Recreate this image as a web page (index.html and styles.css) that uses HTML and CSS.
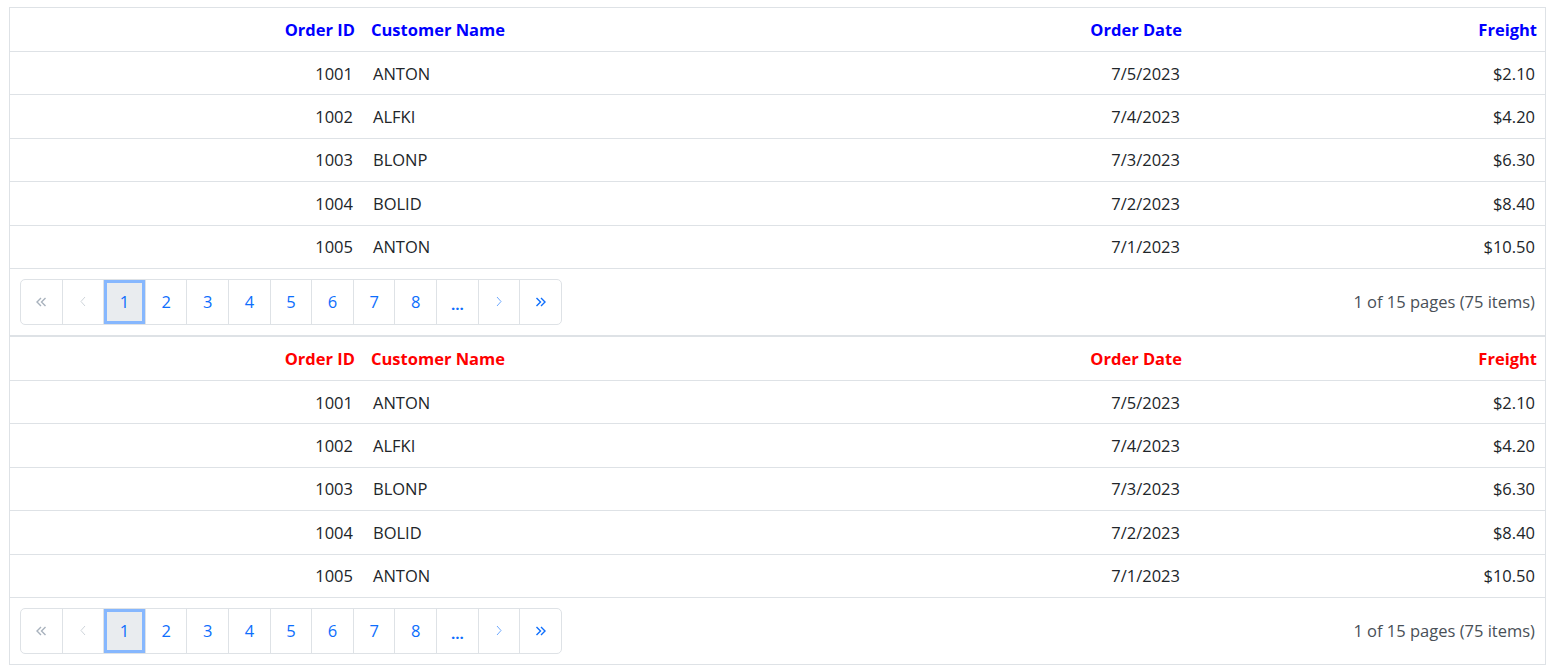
FILE: index.html
```html
<!DOCTYPE html>
<html lang="en">
<head>
<meta charset="utf-8">
<title>Orders</title>
<link rel="stylesheet" href="styles.css">
</head>
<body>
<div class="page">
  <div class="grid">
    <div class="row head blue">
      <div class="cell r">Order ID</div>
      <div class="cell l">Customer Name</div>
      <div class="cell r">Order Date</div>
      <div class="cell r">Freight</div>
    </div>
    <div class="row"><div class="cell r">1001</div><div class="cell l">ANTON</div><div class="cell r">7/5/2023</div><div class="cell r">$2.10</div></div>
    <div class="row"><div class="cell r">1002</div><div class="cell l">ALFKI</div><div class="cell r">7/4/2023</div><div class="cell r">$4.20</div></div>
    <div class="row"><div class="cell r">1003</div><div class="cell l">BLONP</div><div class="cell r">7/3/2023</div><div class="cell r">$6.30</div></div>
    <div class="row"><div class="cell r">1004</div><div class="cell l">BOLID</div><div class="cell r">7/2/2023</div><div class="cell r">$8.40</div></div>
    <div class="row"><div class="cell r">1005</div><div class="cell l">ANTON</div><div class="cell r">7/1/2023</div><div class="cell r">$10.50</div></div>
    <div class="pager">
      <div class="pages">
        <span class="pg dis"><svg width="12" height="10" viewBox="0 0 12 10"><path d="M6 1 L2 5 L6 9 M10.5 1 L6.5 5 L10.5 9" fill="none" stroke="#a8b2bd" stroke-width="1.4"/></svg></span>
        <span class="pg dis"><svg width="6" height="11" viewBox="0 0 6 11"><path d="M5 1 L1 5.5 L5 10" fill="none" stroke="#ced4da" stroke-width="1"/></svg></span>
        <span class="pg active">1</span>
        <span class="pg">2</span>
        <span class="pg">3</span>
        <span class="pg">4</span>
        <span class="pg">5</span>
        <span class="pg">6</span>
        <span class="pg">7</span>
        <span class="pg">8</span>
        <span class="pg dots">...</span>
        <span class="pg"><svg width="6" height="11" viewBox="0 0 6 11"><path d="M1 1 L5 5.5 L1 10" fill="none" stroke="#6ea8fe" stroke-width="1"/></svg></span>
        <span class="pg"><svg width="12" height="10" viewBox="0 0 12 10"><path d="M1.5 1 L5.5 5 L1.5 9 M6 1 L10 5 L6 9" fill="none" stroke="#0d6efd" stroke-width="1.4"/></svg></span>
      </div>
      <div class="info">1 of 15 pages (75 items)</div>
    </div>
  </div>
  <div class="grid">
    <div class="row head red">
      <div class="cell r">Order ID</div>
      <div class="cell l">Customer Name</div>
      <div class="cell r">Order Date</div>
      <div class="cell r">Freight</div>
    </div>
    <div class="row"><div class="cell r">1001</div><div class="cell l">ANTON</div><div class="cell r">7/5/2023</div><div class="cell r">$2.10</div></div>
    <div class="row"><div class="cell r">1002</div><div class="cell l">ALFKI</div><div class="cell r">7/4/2023</div><div class="cell r">$4.20</div></div>
    <div class="row"><div class="cell r">1003</div><div class="cell l">BLONP</div><div class="cell r">7/3/2023</div><div class="cell r">$6.30</div></div>
    <div class="row"><div class="cell r">1004</div><div class="cell l">BOLID</div><div class="cell r">7/2/2023</div><div class="cell r">$8.40</div></div>
    <div class="row"><div class="cell r">1005</div><div class="cell l">ANTON</div><div class="cell r">7/1/2023</div><div class="cell r">$10.50</div></div>
    <div class="pager">
      <div class="pages">
        <span class="pg dis"><svg width="12" height="10" viewBox="0 0 12 10"><path d="M6 1 L2 5 L6 9 M10.5 1 L6.5 5 L10.5 9" fill="none" stroke="#a8b2bd" stroke-width="1.4"/></svg></span>
        <span class="pg dis"><svg width="6" height="11" viewBox="0 0 6 11"><path d="M5 1 L1 5.5 L5 10" fill="none" stroke="#ced4da" stroke-width="1"/></svg></span>
        <span class="pg active">1</span>
        <span class="pg">2</span>
        <span class="pg">3</span>
        <span class="pg">4</span>
        <span class="pg">5</span>
        <span class="pg">6</span>
        <span class="pg">7</span>
        <span class="pg">8</span>
        <span class="pg dots">...</span>
        <span class="pg"><svg width="6" height="11" viewBox="0 0 6 11"><path d="M1 1 L5 5.5 L1 10" fill="none" stroke="#6ea8fe" stroke-width="1"/></svg></span>
        <span class="pg"><svg width="12" height="10" viewBox="0 0 12 10"><path d="M1.5 1 L5.5 5 L1.5 9 M6 1 L10 5 L6 9" fill="none" stroke="#0d6efd" stroke-width="1.4"/></svg></span>
      </div>
      <div class="info">1 of 15 pages (75 items)</div>
    </div>
  </div>
</div>
</body>
</html>
```

FILE: styles.css
```css
html, body {
  margin: 0;
  padding: 0;
  background: #ffffff;
}
body {
  font-family: "Open Sans", "Noto Sans", "Liberation Sans", sans-serif;
  font-size: 16.5px;
  color: #212529;
}
.page {
  padding: 7px 0 0 9px;
}
.grid {
  width: 1537px;
  box-sizing: border-box;
  border: 1px solid #dee2e6;
}
.row {
  display: grid;
  grid-template-columns: 353px 1fr 300px 355px;
  height: 43.4px;
  box-sizing: border-box;
  border-bottom: 1px solid #dee2e6;
}
.row.head {
  height: 44px;
  font-weight: 700;
}
.row.blue { color: #0000ff; }
.row.red { color: #ff0000; }
.cell {
  display: flex;
  align-items: center;
  padding: 0 10px;
  white-space: nowrap;
}
.cell.r { justify-content: flex-end; }
.cell.l { justify-content: flex-start; }
.head .cell { padding: 0 8px; }
.pager {
  height: 66px;
  box-sizing: border-box;
  padding: 10px 10px 10px 10px;
  display: flex;
  align-items: center;
  justify-content: space-between;
}
.pages {
  display: flex;
  width: 542px;
  height: 46px;
  box-sizing: border-box;
  border: 1px solid #dee2e6;
  border-radius: 5px;
  overflow: hidden;
}
.pg {
  flex: 1 1 0;
  display: flex;
  align-items: center;
  justify-content: center;
  color: #0d6efd;
  border-left: 1px solid #dee2e6;
  box-sizing: border-box;
}
.pg:first-child { border-left: none; }
.pg.active {
  background: #e9ecef;
  box-shadow: inset 0 0 0 3px #86b7fe;
}
.pg.dots {
  font-weight: 700;
  font-size: 15px;
  padding-top: 4px;
}
.info {
  color: #495057;
  white-space: nowrap;
}
```
